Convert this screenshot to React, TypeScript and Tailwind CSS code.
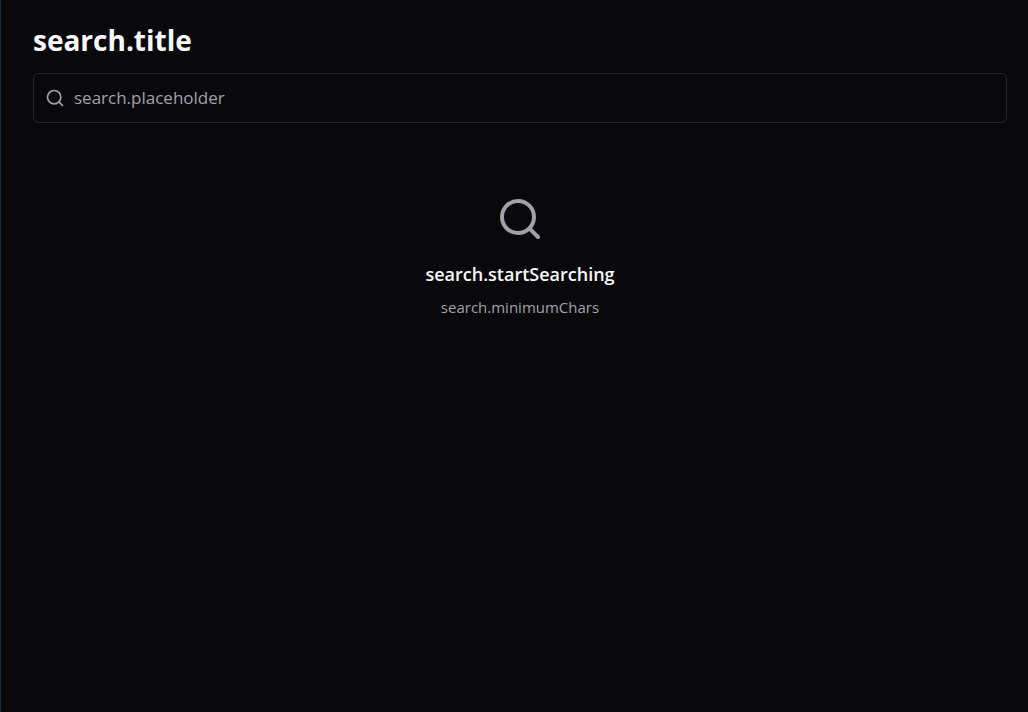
import { Search } from 'lucide-react';

export default function App() {
  return (
    <main className="min-h-screen border-l border-[#1c2b3a] bg-[#09090b] pt-5 pr-[21px] pl-8 font-['Open_Sans','Noto_Sans',sans-serif] text-[#fafafa]">
      <h1 className="text-[28px] leading-[41px] font-bold">search.title</h1>
      <label className="mt-3 flex h-[50px] items-center gap-[9px] rounded-md border border-[#27272a] px-[11px] text-[#a1a1aa]">
        <Search size={20} aria-hidden="true" />
        <input
          type="text"
          aria-label="search.placeholder"
          placeholder="search.placeholder"
          className="min-w-0 flex-1 bg-transparent text-[17px] leading-7 outline-none placeholder:text-[#a1a1aa]"
        />
      </label>
      <section className="mt-18 flex flex-col items-center text-center">
        <Search size={48} className="text-[#a1a1aa]" aria-hidden="true" />
        <h2 className="mt-4 text-lg leading-[30px] font-semibold">search.startSearching</h2>
        <p className="mt-1.5 text-[15px] leading-6 text-[#a1a1aa]">search.minimumChars</p>
      </section>
    </main>
  );
}
